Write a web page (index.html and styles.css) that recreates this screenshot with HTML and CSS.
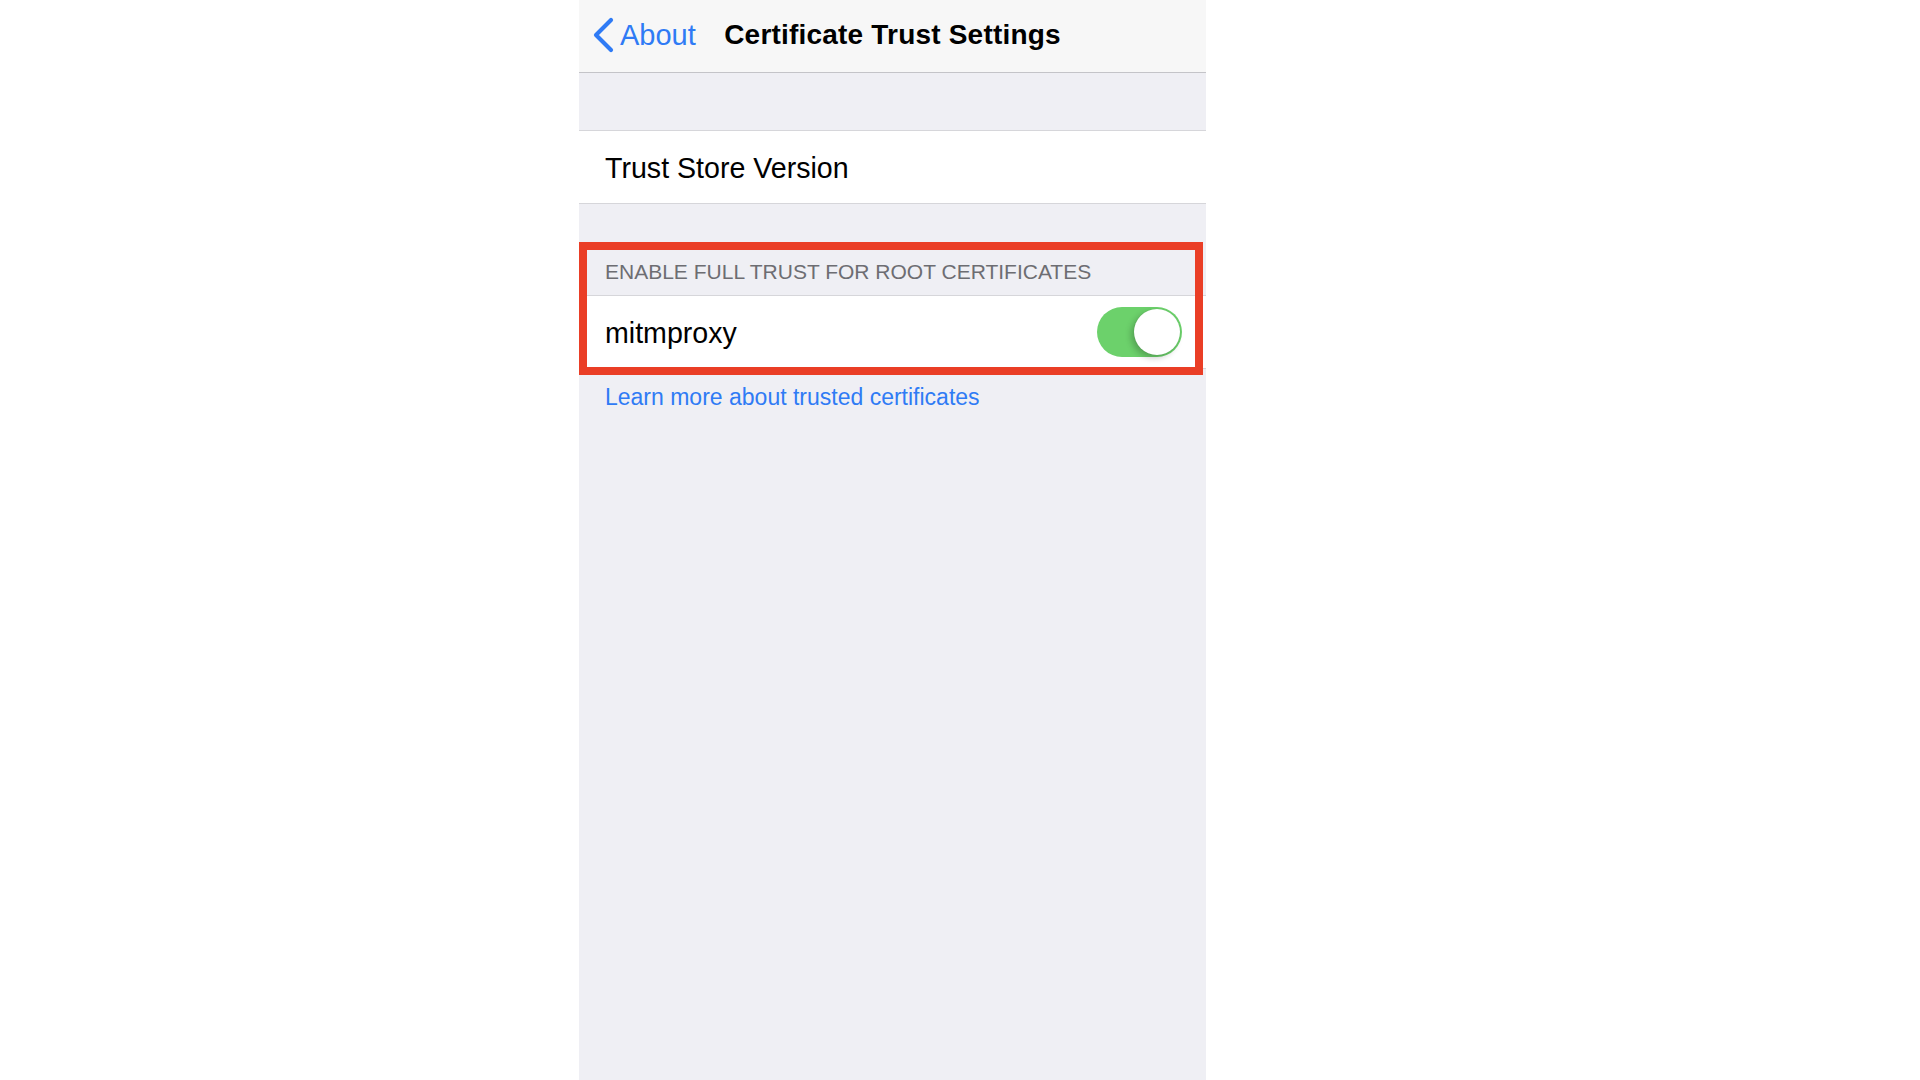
FILE: index.html
```html
<!DOCTYPE html>
<html lang="en">
<head>
    <meta charset="UTF-8">
    <meta name="viewport" content="width=device-width, initial-scale=1.0">
    <title>Certificate Trust Settings</title>
    <link rel="stylesheet" href="styles.css">
</head>
<body>
    <div class="phone">
        <div class="nav-bar">
            <a class="back" href="#">
                <svg class="chevron" width="22" height="36" viewBox="0 0 22 36">
                    <path d="M18 3 L3 18 L18 33" fill="none" stroke="#2f7bf5" stroke-width="4.2" stroke-linecap="round" stroke-linejoin="round"/>
                </svg>
                <span>About</span>
            </a>
            <div class="nav-title">Certificate Trust Settings</div>
        </div>

        <div class="group first">
            <div class="cell">Trust Store Version</div>
        </div>

        <div class="section">
            <div class="section-header">ENABLE FULL TRUST FOR ROOT CERTIFICATES</div>
            <div class="group">
                <div class="cell">
                    <span>mitmproxy</span>
                    <label class="switch on">
                        <span class="knob"></span>
                    </label>
                </div>
            </div>
            <div class="highlight"></div>
        </div>

        <div class="section-footer">
            <a href="#">Learn more about trusted certificates</a>
        </div>
    </div>
</body>
</html>
```

FILE: styles.css
```css
body {
    margin: 0;
    background: #fff;
    font-family: "Liberation Sans", Arial, sans-serif;
}

.phone {
    width: 627px;
    height: 1080px;
    margin-left: 579px;
    background: #efeff4;
}

.nav-bar {
    height: 70px;
    padding-bottom: 2px;
    display: grid;
    grid-template-columns: 1fr auto 1fr;
    align-items: center;
    background: #f7f7f7;
    border-bottom: 1px solid #c4c4c8;
}

.back {
    display: flex;
    align-items: center;
    gap: 5px;
    padding-left: 14px;
    color: #2f7bf5;
    font-size: 29px;
    text-decoration: none;
}

.chevron {
    display: block;
}

.nav-title {
    font-size: 28px;
    font-weight: bold;
    color: #000;
    letter-spacing: 0.2px;
}

.group {
    background: #fff;
    border-top: 1px solid #d6d6da;
    border-bottom: 1px solid #d6d6da;
}

.group.first {
    margin-top: 57px;
}

.cell {
    height: 70px;
    padding: 2px 24px 0 26px;
    display: flex;
    align-items: center;
    justify-content: space-between;
    font-size: 28.6px;
    color: #000;
}

.section {
    position: relative;
}

.section-header {
    padding: 55px 26px 10px;
    font-size: 21px;
    line-height: 26px;
    color: #6d6d72;
}

.switch {
    width: 85px;
    height: 50px;
    margin-top: -2px;
    border-radius: 25px;
    background: #6cd16b;
    display: flex;
    align-items: center;
    justify-content: flex-end;
    padding: 0 2px;
    box-sizing: border-box;
}

.knob {
    width: 46px;
    height: 46px;
    border-radius: 50%;
    background: #fff;
    box-shadow: -3px 3px 6px rgba(0, 0, 0, 0.22), 0 0 1px rgba(0, 0, 0, 0.15);
}

/* red annotation box drawn over the section */
.highlight {
    position: absolute;
    top: 38px;
    left: 0;
    width: 608px;
    height: 117px;
    border: 8px solid #ea3e26;
}

.section-footer {
    padding: 14px 26px;
    font-size: 23px;
    line-height: 28px;
}

.section-footer a {
    color: #2f7bf5;
    text-decoration: none;
}
```
